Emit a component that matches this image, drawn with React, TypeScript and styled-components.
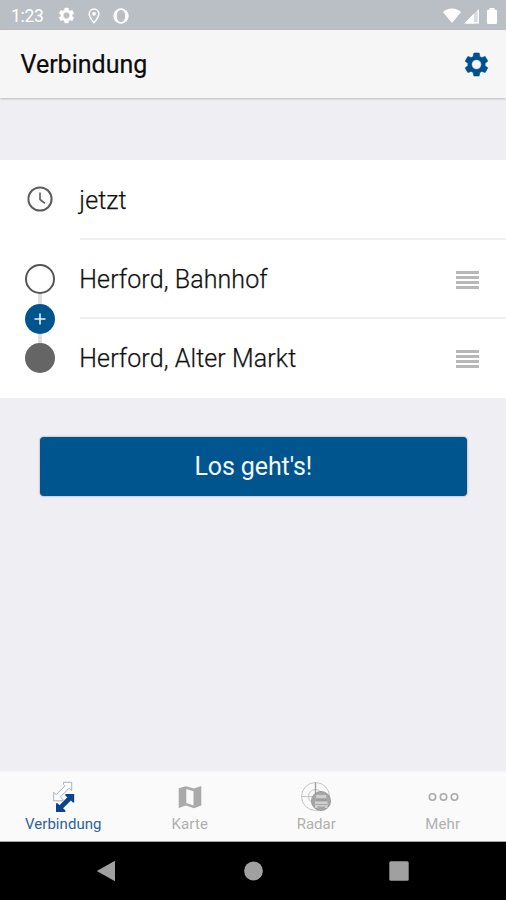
import React from "react";
import styled, { createGlobalStyle } from "styled-components";

const GlobalStyle = createGlobalStyle`
  * { box-sizing: border-box; }
  body { margin: 0; background: #eeeef3; font-family: Roboto, "Liberation Sans", sans-serif; }
  svg { display: block; flex: none; }
`;

const Screen = styled.div`
  display: flex;
  flex-direction: column;
  width: 506px;
  height: 900px;
  overflow: hidden;
  background: #eeeef3;
`;

const StatusBar = styled.div`
  display: flex;
  align-items: center;
  height: 30px;
  padding: 1px 9px 0 11px;
  background: #babec5;
  color: #fff;
`;

const StatusTime = styled.span`
  width: 45.5px;
  font-size: 17.5px;
  line-height: 20px;
  letter-spacing: -0.3px;
`;

const StatusIcons = styled.div<{ $gap: number; $end?: boolean }>`
  display: flex;
  align-items: center;
  gap: ${(p) => p.$gap}px;
  margin-left: ${(p) => (p.$end ? "auto" : "0")};
`;

const AppBar = styled.header`
  display: flex;
  align-items: center;
  justify-content: space-between;
  height: 68px;
  padding: 0 15px 0 20.5px;
  background: #f6f6f6;
  box-shadow: 0 1px 2px rgba(0, 0, 0, 0.22);
`;

const Title = styled.h1`
  margin: 1px 0 0;
  font-size: 25px;
  font-weight: 400;
  line-height: 30px;
  letter-spacing: 0;
  -webkit-text-stroke: 0.2px #0c0c0c;
  color: #0c0c0c;
`;

const IconButton = styled.button`
  display: flex;
  padding: 0;
  border: 0;
  background: none;
  color: #00508c;
`;

const Card = styled.section`
  display: grid;
  grid-template-columns: 80px 1fr;
  height: 238px;
  margin-top: 62px;
  background: #fff;
`;

const Rail = styled.div`
  display: flex;
  flex-direction: column;
  align-items: center;
  padding-top: 26px;
`;

const RailClock = styled.div`
  height: 78px;
`;

const Link = styled.span<{ $height: number }>`
  width: 4px;
  height: ${(p) => p.$height}px;
  background: #e0e0e0;
`;

const Stop = styled.span<{ $filled?: boolean }>`
  width: 30px;
  height: 30px;
  border: 2px solid ${(p) => (p.$filled ? "#656565" : "#555")};
  border-radius: 50%;
  background: ${(p) => (p.$filled ? "#656565" : "#fff")};
`;

const AddStop = styled.button`
  display: flex;
  align-items: center;
  justify-content: center;
  width: 30px;
  height: 30px;
  padding: 0;
  border: 0;
  border-radius: 50%;
  background: #00558f;
`;

const Fields = styled.div`
  display: flex;
  flex-direction: column;
`;

const Field = styled.div<{ $height: number; $last?: boolean; $top?: number }>`
  display: flex;
  align-items: center;
  justify-content: space-between;
  height: ${(p) => p.$height}px;
  padding-top: ${(p) => p.$top ?? 0}px;
  padding-right: 27px;
  border-bottom: ${(p) => (p.$last ? "0" : "2px solid #f0f0f0")};
`;

const FieldText = styled.span`
  margin-left: -0.7px;
  font-size: 25px;
  font-weight: 300;
  line-height: 30px;
  letter-spacing: 0.1px;
  -webkit-text-stroke: 0.25px #111;
  color: #111;
`;

const Handle = styled.span`
  display: flex;
  flex-direction: column;
  justify-content: space-between;
  width: 23px;
  height: 18px;
`;

const HandleLine = styled.i`
  height: 3px;
  background: #b8b8b8;
`;

const SubmitButton = styled.button`
  width: 427.5px;
  height: 59px;
  margin: 39px 0 0 39.5px;
  padding: 0;
  border: 0;
  border-radius: 4px;
  background: #00558e;
  box-shadow: 0 0 2px rgba(0, 30, 60, 0.5);
  font-family: inherit;
  font-size: 25px;
  line-height: 30px;
  letter-spacing: -0.1px;
  color: #f4f8fc;
`;

const TabBar = styled.nav`
  display: grid;
  grid-template-columns: repeat(4, 1fr);
  height: 71px;
  margin-top: auto;
  border-top: 1px solid #f5f5f6;
  border-bottom: 1px solid #a5a5a5;
  background: #fafafa;
`;

const Tab = styled.div<{ $active?: boolean }>`
  display: flex;
  flex-direction: column;
  align-items: center;
  padding-top: 9px;
  color: ${(p) => (p.$active ? "#2f6399" : "#b0b0b0")};
`;

const TabLabel = styled.span<{ $spacing: number }>`
  margin-top: 2px;
  font-size: 15px;
  line-height: 18px;
  letter-spacing: ${(p) => p.$spacing}px;
`;

const SystemNav = styled.div`
  display: flex;
  justify-content: space-between;
  align-items: center;
  height: 58px;
  padding: 0 97px 0 96px;
  background: #000;
`;

const GEAR =
  "M19.14 12.94c.04-.3.06-.61.06-.94 0-.32-.02-.64-.07-.94l2.03-1.58c.18-.14.23-.41.12-.61l-1.92-3.32c-.12-.22-.37-.29-.59-.22l-2.39.96c-.5-.38-1.03-.7-1.62-.94l-.36-2.54c-.04-.24-.24-.41-.48-.41h-3.84c-.24 0-.43.17-.47.41l-.36 2.54c-.59.24-1.13.57-1.62.94l-2.39-.96c-.22-.08-.47 0-.59.22L2.74 8.87c-.12.21-.08.47.12.61l2.03 1.58c-.05.3-.09.63-.09.94s.02.64.07.94l-2.03 1.58c-.18.14-.23.41-.12.61l1.92 3.32c.12.22.37.29.59.22l2.39-.96c.5.38 1.03.7 1.62.94l.36 2.54c.05.24.24.41.48.41h3.84c.24 0 .44-.17.47-.41l.36-2.54c.59-.24 1.13-.56 1.62-.94l2.39.96c.22.08.47 0 .59-.22l1.92-3.32c.12-.22.07-.47-.12-.61l-2.01-1.58zM12 16a4 4 0 1 1 0-8 4 4 0 0 1 0 8z";

const GearIcon = ({ size }: { size: number }) => (
  <svg width={size} height={size} viewBox="0 0 24 24" fill="currentColor">
    <path d={GEAR} stroke="currentColor" strokeWidth="0.400" />
  </svg>
);

const PinIcon = () => (
  <svg width="12" height="16" viewBox="0 0 12 16" fill="none" stroke="#fff">
    <path d="M6 1a4.800 4.800 0 0 0-4.800 4.800C1.200 9.200 6 14.800 6 14.800s4.800-5.600 4.800-9A4.800 4.800 0 0 0 6 1z" strokeWidth="1.500" />
    <circle cx="6" cy="5.800" r="1.900" fill="#fff" stroke="none" />
  </svg>
);

const RingIcon = () => (
  <svg width="16" height="16" viewBox="0 0 16 16">
    <path
      fill="#fff"
      fillRule="evenodd"
      d="M8 .3a7.700 7.700 0 1 0 0 15.400A7.700 7.700 0 0 0 8 .3zM8 2c2.700 0 4.200 2.700 4.200 6S10.700 14 8 14 3.800 11.300 3.800 8 5.300 2 8 2z"
    />
  </svg>
);

const WifiIcon = () => (
  <svg width="20" height="16" viewBox="0 0 20 16">
    <path d="M10 15 .9 4C3.300 1.800 6.500.600 10 .600s6.700 1.200 9.100 3.400z" fill="#fff" />
  </svg>
);

const SignalIcon = () => (
  <svg width="16" height="16" viewBox="0 0 16 16">
    <path d="M15 .5v15H.3z" fill="#fff" fillOpacity="0.450" />
    <path d="M10 5.500v10H.3z" fill="#fff" />
    <path d="M14.300 2v12.800H3" fill="none" stroke="#fff" strokeWidth="1.400" />
  </svg>
);

const BatteryIcon = () => (
  <svg width="10" height="16" viewBox="0 0 10 16">
    <path d="M2.500 0h5v1.700H9a1 1 0 0 1 1 1V15a1 1 0 0 1-1 1H1a1 1 0 0 1-1-1V2.700a1 1 0 0 1 1-1h1.500z" fill="#fff" />
  </svg>
);

const ClockIcon = () => (
  <svg width="26" height="26" viewBox="0 0 26 26" fill="none" stroke="#5c5c5c">
    <circle cx="13" cy="13" r="11.600" strokeWidth="2" />
    <path d="M13 6.500v7l5 3.800" strokeWidth="1.600" />
  </svg>
);

const ArrowsIcon = () => (
  <svg width="24" height="32" viewBox="0 0 24 32">
    <path
      d="M12.500 1.300h8.200v8.200l-2.500-2.400-8.800 8.800 2.500 2.400v1.500H2.700v-8.600l2.500 2.400L14 4.800l-1.500-1.500z"
      fill="#fdfdfd"
      stroke="#9dacb8"
      strokeWidth="0.900"
    />
    <path
      d="M14.300 13H23.200v8.600h-1.300l-2-2.200-7.800 7.900 2.300 2.200V31H5v-8.800h1.500l2 2.100 7.900-8-2.100-1.900z"
      fill="#08458a"
    />
  </svg>
);

const MapIcon = () => (
  <svg width="24" height="32" viewBox="0 0 24 32">
    <path d="M.7 7.300 8 5.200v19.400L.7 27z" fill="#aaa" />
    <path d="m8 5.200 8 2.400v19.600l-8-2.600z" fill="#aaa" />
    <path d="m16 7.600 7.300-2.700v19.600L16 27.200z" fill="#aaa" />
    <path d="m8.300 8 7.200 2.200v14.200l-7.200-2.300z" fill="#fafafa" />
  </svg>
);

const RadarIcon = () => (
  <svg width="32" height="32" viewBox="0 0 32 32" fill="none" stroke="#c4c4c4">
    <circle cx="15.500" cy="15.500" r="14" />
    <circle cx="15.500" cy="15.500" r="7" />
    <path d="M1.500 15.500h14" />
    <path d="M15.500 1.500v14" stroke="#a0a0a0" strokeWidth="1.400" />
    <circle cx="21" cy="20" r="9.500" fill="#a6a6a6" stroke="#989898" />
    <path d="M16.500 14h9.500l1.500 7.500v5.500h-2.500v-1.500h-7.500V27H15v-5.500z" fill="#cfcfcf" stroke="none" />
    <path d="M15.500 18.800h11.500" stroke="#9c9c9c" strokeWidth="3" />
    <path d="M15.500 23.500h11.500" stroke="#a8a8a8" strokeWidth="1" />
  </svg>
);

const MoreIcon = () => (
  <svg width="32" height="32" viewBox="0 0 32 32" fill="none" stroke="#aaa" strokeWidth="1.600">
    <circle cx="5.500" cy="16" r="3.200" />
    <circle cx="16.500" cy="16" r="3.200" />
    <circle cx="27.500" cy="16" r="3.200" />
  </svg>
);

const DragHandle = () => (
  <Handle>
    <HandleLine />
    <HandleLine />
    <HandleLine />
    <HandleLine />
  </Handle>
);

const tabs = [
  { label: "Verbindung", icon: <ArrowsIcon />, spacing: 0.05, active: true },
  { label: "Karte", icon: <MapIcon />, spacing: 0.15 },
  { label: "Radar", icon: <RadarIcon />, spacing: 0 },
  { label: "Mehr", icon: <MoreIcon />, spacing: 0.1 },
];

export default function App() {
  return (
    <Screen>
      <GlobalStyle />
      <StatusBar>
        <StatusTime>1:23</StatusTime>
        <StatusIcons $gap={12.5}>
          <GearIcon size={19} />
          <PinIcon />
          <RingIcon />
        </StatusIcons>
        <StatusIcons $gap={7} $end>
          <StatusIcons $gap={2}>
            <WifiIcon />
            <SignalIcon />
          </StatusIcons>
          <BatteryIcon />
        </StatusIcons>
      </StatusBar>
      <AppBar>
        <Title>Verbindung</Title>
        <IconButton aria-label="Einstellungen">
          <GearIcon size={29} />
        </IconButton>
      </AppBar>
      <Card>
        <Rail>
          <RailClock>
            <ClockIcon />
          </RailClock>
          <Stop />
          <Link $height={10} />
          <AddStop aria-label="Zwischenhalt">
            <svg width="12" height="12" viewBox="0 0 12 12" stroke="#e6f0f8" strokeWidth="1.600">
              <path d="M6 .5v11M.5 6h11" />
            </svg>
          </AddStop>
          <Link $height={9} />
          <Stop $filled />
        </Rail>
        <Fields>
          <Field $height={80} $top={3}>
            <FieldText>jetzt</FieldText>
          </Field>
          <Field $height={79} $top={2}>
            <FieldText>Herford, Bahnhof</FieldText>
            <DragHandle />
          </Field>
          <Field $height={79} $last>
            <FieldText>Herford, Alter Markt</FieldText>
            <DragHandle />
          </Field>
        </Fields>
      </Card>
      <SubmitButton>Los geht's!</SubmitButton>
      <TabBar>
        {tabs.map((t) => (
          <Tab key={t.label} $active={t.active}>
            {t.icon}
            <TabLabel $spacing={t.spacing}>{t.label}</TabLabel>
          </Tab>
        ))}
      </TabBar>
      <SystemNav>
        <svg width="20" height="22" viewBox="0 0 20 22">
          <path d="M19 .8v20.400L.8 11z" fill="#a0a0a0" />
        </svg>
        <svg width="20" height="20" viewBox="0 0 20 20">
          <circle cx="10.500" cy="10" r="9.400" fill="#a0a0a0" />
        </svg>
        <svg width="20" height="20" viewBox="0 0 20 20">
          <rect x="0.300" y="0.300" width="19.400" height="19.400" rx="1.500" fill="#a0a0a0" />
        </svg>
      </SystemNav>
    </Screen>
  );
}
